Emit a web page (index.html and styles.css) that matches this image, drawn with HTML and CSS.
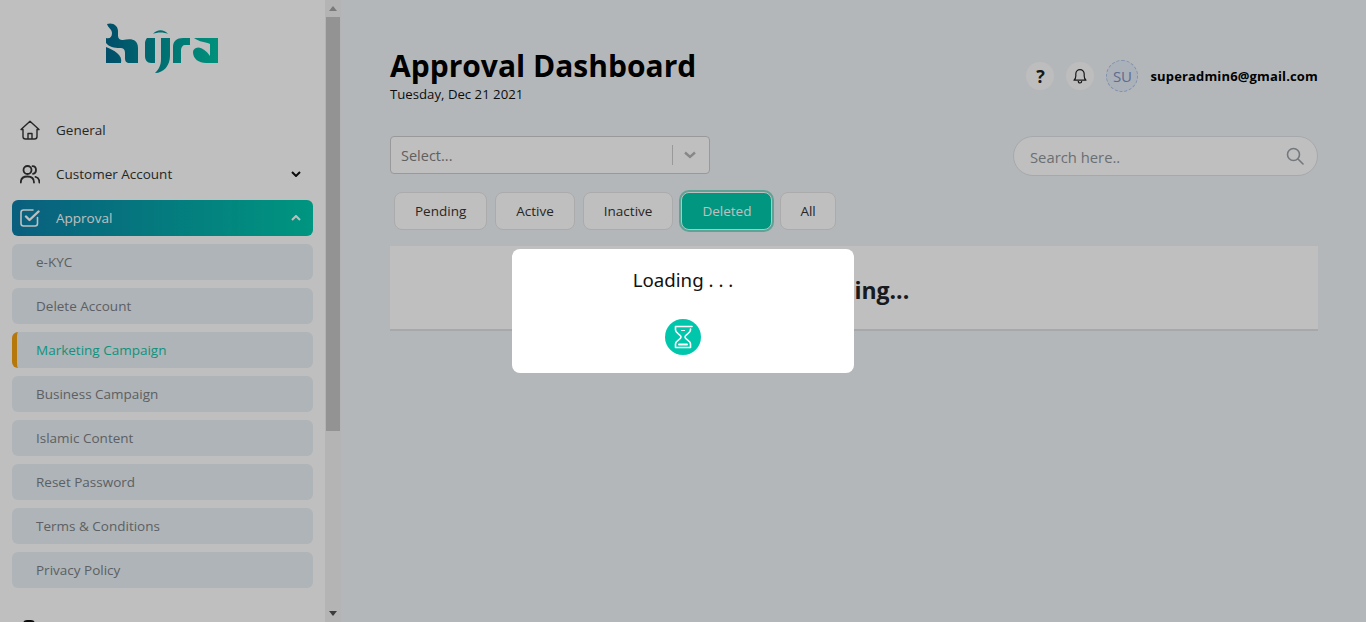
FILE: index.html
```html
<!DOCTYPE html>
<html lang="en">

<head>
    <meta charset="UTF-8">
    <meta name="viewport" content="width=device-width, initial-scale=1.0">
    <title>Approval Dashboard</title>
    <link rel="stylesheet" href="styles.css">
</head>

<body>

    <aside class="sidebar">
        <div class="sidebar-content">
            <div class="logo">
                <svg width="112" height="50" viewBox="0 0 112 50">
                    <defs>
                        <linearGradient id="logoGrad" gradientUnits="userSpaceOnUse" x1="0" y1="0" x2="112" y2="0">
                            <stop offset="0" stop-color="#00688c" />
                            <stop offset="1" stop-color="#00c2a4" />
                        </linearGradient>
                    </defs>
                    <g fill="url(#logoGrad)" fill-rule="evenodd">
                        <path d="M1 1C7-1 12 3 12 8V12C12 16 14 17 17 17C25 15 32 16 32 25V40H24C20 40 19 38 19 35V30C19 26 17 25 14 25C8 25 3 24 0 20V15C4 16 6 14 6 10C6 6 2 5 1 1Z" />
                        <path d="M0 24C8 27 17 32 15 40H0Z" />
                        <path d="M41 15H49V40H45C41 40 39 37 39 33V20C39 18 40 16 41 15Z" />
                        <path d="M47 11C51 6 58 6 62 11C58 9 51 9 47 11Z" />
                        <path d="M55 15H64V33C64 42 58 50 49 50C53 46 55 42 55 36Z" />
                        <path d="M67 24C67 18 71 15 77 15H84V22H79C77 22 75 24 75 27V40H67Z" />
                        <path d="M88 15H112V40H100C93 40 87 36 87 29C87 27 88 26 90 25C94 23 100 27 104 33V21C100 19 93 19 88 15Z" />
                    </g>
                </svg>
            </div>

            <nav class="menu">
                <a class="menu-item" href="#">
                    <svg class="menu-icon" width="20" height="20" viewBox="0 0 20 20" fill="none" stroke="#333" stroke-width="1.4" stroke-linejoin="round">
                        <path d="M1 9.500L10 1.200L19 9.500H17V16.500C17 18 16 19 14.500 19H5.500C4 19 3 18 3 16.500V9.500Z" />
                        <path d="M8 19V13.500H12V19" />
                    </svg>
                    <span>General</span>
                </a>
                <a class="menu-item" href="#">
                    <svg class="menu-icon" width="20" height="20" viewBox="0 0 20 20" fill="none" stroke="#333" stroke-width="1.800" stroke-linecap="round">
                        <circle cx="7.500" cy="6" r="4" />
                        <path d="M.8 18.500C.8 14.500 3.500 12.500 7.500 12.500C11.500 12.500 14 14.500 14 18.500" />
                        <path d="M12.500 2.200C15 2.200 16 4 16 6C16 8 14.600 9.600 13 9.800" />
                        <path d="M15.500 12.800C18 13.400 19.400 15.500 19.400 18.500" />
                    </svg>
                    <span>Customer Account</span>
                    <svg class="chevron" width="10" height="6" viewBox="0 0 10 6" fill="none" stroke="#111" stroke-width="2">
                        <path d="M1 1L5 5L9 1" />
                    </svg>
                </a>
                <a class="menu-item menu-item-active" href="#">
                    <svg class="menu-icon" width="20" height="20" viewBox="0 0 20 20" fill="none" stroke="#fff" stroke-width="1.600" stroke-linecap="round" stroke-linejoin="round">
                        <path d="M17.500 9.500V15.500C17.500 17 16.500 18 15 18H3.500C2 18 1 17 1 15.500V4.500C1 3 2 2 3.500 2H13" />
                        <path d="M6 8.500L9.500 12L18.500 3.500" stroke-width="2.400" />
                    </svg>
                    <span>Approval</span>
                    <svg class="chevron" width="10" height="6" viewBox="0 0 10 6" fill="none" stroke="#fff" stroke-width="2">
                        <path d="M1 5L5 1L9 5" />
                    </svg>
                </a>
                <a class="submenu-item" href="#">e-KYC</a>
                <a class="submenu-item" href="#">Delete Account</a>
                <a class="submenu-item submenu-item-active" href="#">Marketing Campaign</a>
                <a class="submenu-item" href="#">Business Campaign</a>
                <a class="submenu-item" href="#">Islamic Content</a>
                <a class="submenu-item" href="#">Reset Password</a>
                <a class="submenu-item" href="#">Terms &amp; Conditions</a>
                <a class="submenu-item" href="#">Privacy Policy</a>
                <a class="menu-item menu-item-last" href="#">
                    <svg class="menu-icon" width="20" height="20" viewBox="0 0 20 20" fill="none" stroke="#111" stroke-width="2">
                        <rect x="4" y="1" width="10" height="16" rx="3" />
                    </svg>
                </a>
            </nav>
        </div>

        <div class="scrollbar">
            <span class="arrow-up"></span>
            <span class="thumb"></span>
            <span class="arrow-down"></span>
        </div>
    </aside>

    <main class="content">
        <header class="page-header">
            <div>
                <h1>Approval Dashboard</h1>
                <p class="page-date">Tuesday, Dec 21 2021</p>
            </div>
            <div class="user-box">
                <span class="round-btn help-btn">?</span>
                <span class="round-btn">
                    <svg width="14" height="16" viewBox="0 0 14 16" fill="none" stroke="#222" stroke-width="1.200" stroke-linejoin="round">
                        <path d="M1 12.200C2.300 11 2.800 9.800 2.800 8V6C2.800 3.500 4.600 1.600 7 1.600C9.400 1.600 11.200 3.500 11.200 6V8C11.200 9.800 11.700 11 13 12.200Z" />
                        <path d="M5.300 13C5.300 14.200 6 15 7 15C8 15 8.700 14.200 8.700 13" />
                    </svg>
                </span>
                <span class="avatar">SU</span>
                <span class="user-email">superadmin6@gmail.com</span>
            </div>
        </header>

        <div class="filter-row">
            <div class="select-box">
                <span class="select-text">Select...</span>
                <span class="select-sep"></span>
                <svg class="select-arrow" width="12" height="8" viewBox="0 0 12 8" fill="none" stroke="#b5b5b5" stroke-width="2.400">
                    <path d="M1 1.500L6 6L11 1.500" />
                </svg>
            </div>
            <div class="search-box">
                <span class="search-text">Search here..</span>
                <svg width="18" height="18" viewBox="0 0 18 18" fill="none" stroke="#9aa0a6" stroke-width="1.600" stroke-linecap="round">
                    <circle cx="7.500" cy="7.500" r="6" />
                    <path d="M12 12L17 17" />
                </svg>
            </div>
        </div>

        <div class="tabs">
            <button class="tab">Pending</button>
            <button class="tab">Active</button>
            <button class="tab">Inactive</button>
            <button class="tab tab-active">Deleted</button>
            <button class="tab tab-all">All</button>
        </div>

        <div class="table-card">Loading...</div>
    </main>

    <div class="overlay">
        <div class="modal">
            <p>Loading . . .</p>
            <svg width="36" height="36" viewBox="0 0 36 36">
                <circle cx="18" cy="18" r="18" fill="#00c7ac" />
                <g fill="none" stroke="#fff" stroke-width="1.600" stroke-linecap="round" stroke-linejoin="round">
                    <path d="M27 7.500H10.500V11C10.500 14.500 16 15.500 16 18C16 20.500 10.500 21.500 10.500 25V28.500H25.500V25C25.500 21.500 20 20.500 20 18C20 15.500 25.500 14.500 25.500 11V10" />
                    <path d="M14 25.500H22" stroke-width="2" />
                    <path d="M16.500 11.500H19.500" stroke-width="1.200" />
                </g>
            </svg>
        </div>
    </div>

</body>

</html>
```

FILE: styles.css
```css
/* RESET */
* {
    margin: 0;
    padding: 0;
    box-sizing: border-box;
}

body {
    font-family: 'Open Sans', sans-serif;
    display: flex;
    height: 100vh;
    overflow: hidden;
    background-color: #f0f5f8;
    color: #222;
}

a {
    text-decoration: none;
}

/* SIDEBAR */
.sidebar {
    width: 341px;
    height: 100vh;
    flex-shrink: 0;
    display: flex;
    background-color: #fff;
    overflow: hidden;
}

.sidebar-content {
    width: 325px;
    padding: 23px 12px 0;
}

.logo {
    height: 89px;
    text-align: center;
    padding-right: 1px;
}

.menu {
    display: flex;
    flex-direction: column;
    gap: 8px;
}

.menu-item {
    display: flex;
    align-items: center;
    height: 36px;
    padding: 0 12px 0 8px;
    border-radius: 6px;
    font-size: 13.5px;
    color: #333;
}

.menu-icon {
    flex-shrink: 0;
    margin-right: 16px;
}

.menu-item .chevron {
    margin-left: auto;
}

.menu-item-active {
    background-image: linear-gradient(90deg, #0d7fa8, #00c8ab);
    color: #fff;
}

.menu-item-last {
    margin-top: 16px;
}

.submenu-item {
    display: flex;
    align-items: center;
    height: 36px;
    padding-left: 24px;
    border-radius: 6px;
    background-color: #e9f1f5;
    font-size: 13.5px;
    color: #7c7f85;
}

.submenu-item-active {
    border-left: 5px solid #f5a00f;
    padding-left: 19px;
    color: #14c4a8;
}

/* SCROLLBAR */
.scrollbar {
    width: 16px;
    display: flex;
    flex-direction: column;
    align-items: center;
    background-color: #f1f1f1;
}

.arrow-up,
.arrow-down {
    width: 0;
    height: 0;
    border-left: 4px solid transparent;
    border-right: 4px solid transparent;
}

.arrow-up {
    margin: 6px 0 6px;
    border-bottom: 5px solid #a3a3a3;
}

.thumb {
    width: 14px;
    height: 414px;
    background-color: #c4c4c4;
}

.arrow-down {
    margin-top: auto;
    margin-bottom: 6px;
    border-top: 5px solid #505050;
}

/* CONTENT */
.content {
    flex: 1;
    padding: 46px 48px 0 49px;
}

.page-header {
    display: flex;
    justify-content: space-between;
    align-items: flex-start;
    height: 90px;
}

.page-header h1 {
    font-size: 30px;
    line-height: 40px;
    font-weight: 700;
    color: #000;
}

.page-date {
    font-size: 13.2px;
    line-height: 16px;
    color: #111;
}

.user-box {
    display: flex;
    align-items: center;
    margin-top: 14px;
}

.round-btn {
    width: 28px;
    height: 28px;
    border-radius: 50%;
    margin-right: 12px;
    display: flex;
    align-items: center;
    justify-content: center;
    background-color: #fcfcfc;
}

.help-btn {
    font-size: 18px;
    font-weight: 700;
    color: #222;
}

.avatar {
    width: 32px;
    height: 32px;
    margin: 0 12px 0 0;
    border-radius: 50%;
    border: 1px dashed #a9c2e8;
    background-color: #e4ecf7;
    display: flex;
    align-items: center;
    justify-content: center;
    font-size: 15px;
    color: #7f8fc0;
}

.user-email {
    font-size: 13px;
    font-weight: 700;
    color: #000;
    letter-spacing: 0.15px;
}

.filter-row {
    display: flex;
    justify-content: space-between;
    align-items: flex-start;
}

.select-box {
    width: 320px;
    height: 38px;
    display: flex;
    align-items: center;
    padding: 0 13px 0 10px;
    background-color: #fff;
    border: 1px solid #ccc;
    border-radius: 4px;
}

.select-text {
    flex: 1;
    font-size: 14.5px;
    color: #808080;
}

.select-sep {
    width: 1px;
    height: 20px;
    margin-right: 11px;
    background-color: #ccc;
}

.search-box {
    width: 305px;
    height: 40px;
    display: flex;
    align-items: center;
    justify-content: space-between;
    padding: 0 13px 0 16px;
    background-color: #fff;
    border: 1px solid #dee2e6;
    border-radius: 20px;
}

.search-text {
    font-size: 14.800px;
    padding-top: 2px;
    color: #8e949a;
}

.tabs {
    display: flex;
    gap: 8px;
    padding-left: 4px;
    margin-top: 16px;
}

.tab {
    height: 38px;
    padding: 0 20px;
    border: 1px solid #e4e4e4;
    border-radius: 8px;
    background-color: #fff;
    font-family: 'Open Sans', sans-serif;
    font-size: 13.5px;
    color: #333;
}

.tab-active {
    background-color: #00c8aa;
    border-color: #fff;
    color: #fff;
    box-shadow: 0 0 0 2px #7fd8c8;
}

.tab-all {
    padding: 0 19px;
}

.table-card {
    height: 85px;
    margin-top: 16px;
    padding-top: 28px;
    background-color: #fff;
    border-bottom: 2px solid #dee2e6;
    text-align: center;
    font-size: 23px;
    font-weight: 700;
    color: #212529;
}

/* LOADING OVERLAY */
.overlay {
    position: fixed;
    top: 0;
    left: 0;
    width: 100%;
    height: 100%;
    padding-top: 249px;
    background-color: rgba(0, 0, 0, 0.25);
    display: flex;
    justify-content: center;
    align-items: flex-start;
}

.modal {
    width: 342px;
    height: 124px;
    padding-top: 17px;
    background-color: #fff;
    border-radius: 8px;
    text-align: center;
}

.modal p {
    font-family: 'Noto Sans', sans-serif;
    font-size: 18.700px;
    line-height: 27px;
    margin-bottom: 26px;
    color: #111;
}

.modal svg {
    display: block;
    margin: 0 auto;
}
```
